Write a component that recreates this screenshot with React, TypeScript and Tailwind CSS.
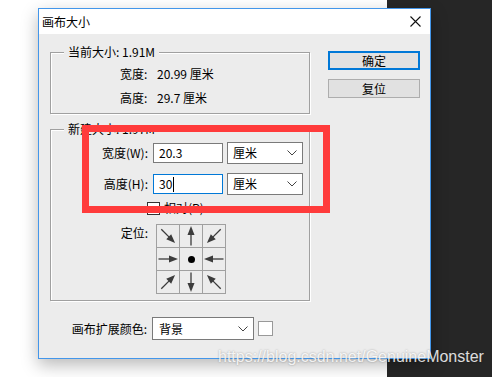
import React from 'react'

const Chevron = () => (
  <svg width="10" height="6" viewBox="0 0 10 6" className="shrink-0">
    <polyline points="0.5,0.5 5,5 9.5,0.5" fill="none" stroke="#444" strokeWidth="1" />
  </svg>
)

// arrow in a 22x22 cell, base shape points right
const Arrow = ({ rot }: { rot: number }) => (
  <svg width="22" height="22" viewBox="0 0 22 22">
    <g transform={`rotate(${rot} 11 11)`}>
      <line x1="1.5" y1="11" x2="13" y2="11" stroke="#3c3c3c" strokeWidth="1.3" />
      <polygon points="12,7.5 21,11 12,14.5" fill="#3c3c3c" />
    </g>
  </svg>
)

const anchors: (number | null)[] = [45, -90, 135, 0, null, 180, -45, 90, -135]

export default function App() {
  return (
    <div className="relative flex h-[377px] w-[492px] overflow-hidden font-['Noto_Sans_CJK_SC','Noto_Sans',sans-serif] text-[12px] text-black">
      <div className="flex-1 bg-white" />
      <div className="w-[105px] bg-[#262626]" />

      {/* dialog window */}
      <div className="absolute left-[38px] top-[8px] flex h-[351px] w-[393px] flex-col border border-[#4396ea] bg-[#ececec] shadow-[0_6px_16px_rgba(0,0,0,0.28)]">
        <div className="flex h-[25px] items-center justify-between bg-white pl-[3px] pr-[9px]">
          <span className="leading-[16px]">画布大小</span>
          <svg width="11" height="11" viewBox="0 0 11 11">
            <path d="M0.5 0.5 L10.5 10.5 M10.5 0.5 L0.5 10.5" stroke="#111" strokeWidth="1.1" />
          </svg>
        </div>

        <div className="flex flex-1 pl-[11px]">
          {/* left column */}
          <div className="flex w-[260px] flex-col">
            <div className="relative mt-[18px] h-[62px] border border-[#a0a0a0] shadow-[1px_1px_0_#fff,inset_1px_1px_0_#fff] pl-[69px] pt-[13px]">
              <span className="absolute left-[13px] top-[-9px] bg-[#ececec] px-[4px] leading-[16px]">当前大小: 1.91M</span>
              <div className="flex flex-col gap-[8px] leading-[16px]">
                <div className="flex">
                  <span className="w-[37px]">宽度:</span>
                  <span>20.99 厘米</span>
                </div>
                <div className="flex">
                  <span className="w-[37px]">高度:</span>
                  <span>29.7 厘米</span>
                </div>
              </div>
            </div>

            <div className="relative mt-[15px] h-[172px] border border-[#a0a0a0] shadow-[1px_1px_0_#fff,inset_1px_1px_0_#fff] pt-[12px]">
              <span className="absolute left-[13px] top-[-9px] bg-[#ececec] px-[4px] leading-[16px]">新建大小: 1.97M</span>

              <div className="flex items-center">
                <span className="w-[97px] text-right leading-[16px]">宽度(W):</span>
                <div className="ml-[5px] flex h-[20px] w-[70px] items-center border border-[#7a7a7a] bg-white pl-[5px] leading-[16px]">20.3</div>
                <div className="ml-[4px] flex h-[22px] w-[76px] items-center justify-between border border-[#7a7a7a] bg-white pl-[5px] pr-[5px] leading-[16px]">
                  <span>厘米</span>
                  <Chevron />
                </div>
              </div>

              <div className="mt-[9px] flex items-center">
                <span className="w-[97px] text-right leading-[16px]">高度(H):</span>
                <div className="ml-[5px] flex h-[20px] w-[70px] items-center border border-[#0078d7] bg-white pl-[5px] leading-[16px]">
                  <span>30</span>
                  <span className="ml-px h-[15px] w-px bg-black" />
                </div>
                <div className="ml-[4px] flex h-[22px] w-[76px] items-center justify-between border border-[#7a7a7a] bg-white pl-[5px] pr-[5px] leading-[16px]">
                  <span>厘米</span>
                  <Chevron />
                </div>
              </div>

              <div className="ml-[96px] mt-[6px] flex h-[14px] items-center">
                <span className="h-[13px] w-[13px] border border-[#333] bg-white" />
                <span className="ml-[4px] leading-[14px]">相对(R)</span>
              </div>

              <div className="mt-[9px] flex items-start">
                <span className="mt-px w-[97px] text-right leading-[16px]">定位:</span>
                <div className="ml-[8px] grid w-[70px] grid-cols-3 border-l border-t border-[#a0a0a0]">
                  {anchors.map((r, i) => (
                    <div key={i} className="flex h-[23px] w-[23px] items-center justify-center border-b border-r border-[#a0a0a0]">
                      {r === null ? <span className="h-[7px] w-[7px] rounded-full bg-black" /> : <Arrow rot={r} />}
                    </div>
                  ))}
                </div>
              </div>
            </div>

            <div className="mt-[16px] flex items-center">
              <span className="w-[97px] text-right leading-[16px]">画布扩展颜色:</span>
              <div className="ml-[5px] flex h-[23px] w-[102px] items-center justify-between border border-[#7a7a7a] bg-white pl-[6px] pr-[5px] leading-[16px]">
                <span>背景</span>
                <Chevron />
              </div>
              <span className="ml-[4px] h-[15px] w-[15px] border border-[#999] bg-white" />
            </div>
          </div>

          {/* buttons */}
          <div className="ml-[18px] flex w-[92px] flex-col pt-[17px]">
            <button className="flex h-[19px] items-center justify-center border-2 border-[#0078d7] bg-[#e1e1e1] leading-[14px]">确定</button>
            <button className="mt-[9px] flex h-[19px] items-center justify-center border border-[#adadad] bg-[#e1e1e1] leading-[14px]">复位</button>
          </div>
        </div>
      </div>

      {/* red annotation box */}
      <div className="absolute left-[82px] top-[125px] h-[88px] w-[248px] border-[7px] border-[#ff3b3b]" />

      {/* watermark */}
      <span className="absolute left-[218px] top-[348px] font-['Liberation_Sans',Arial,sans-serif] text-[16px] leading-[18px] text-white/85 [text-shadow:0_0_2px_rgba(0,0,0,0.35)]">
        https://blog.csdn.net/GenuineMonster
      </span>
    </div>
  )
}
